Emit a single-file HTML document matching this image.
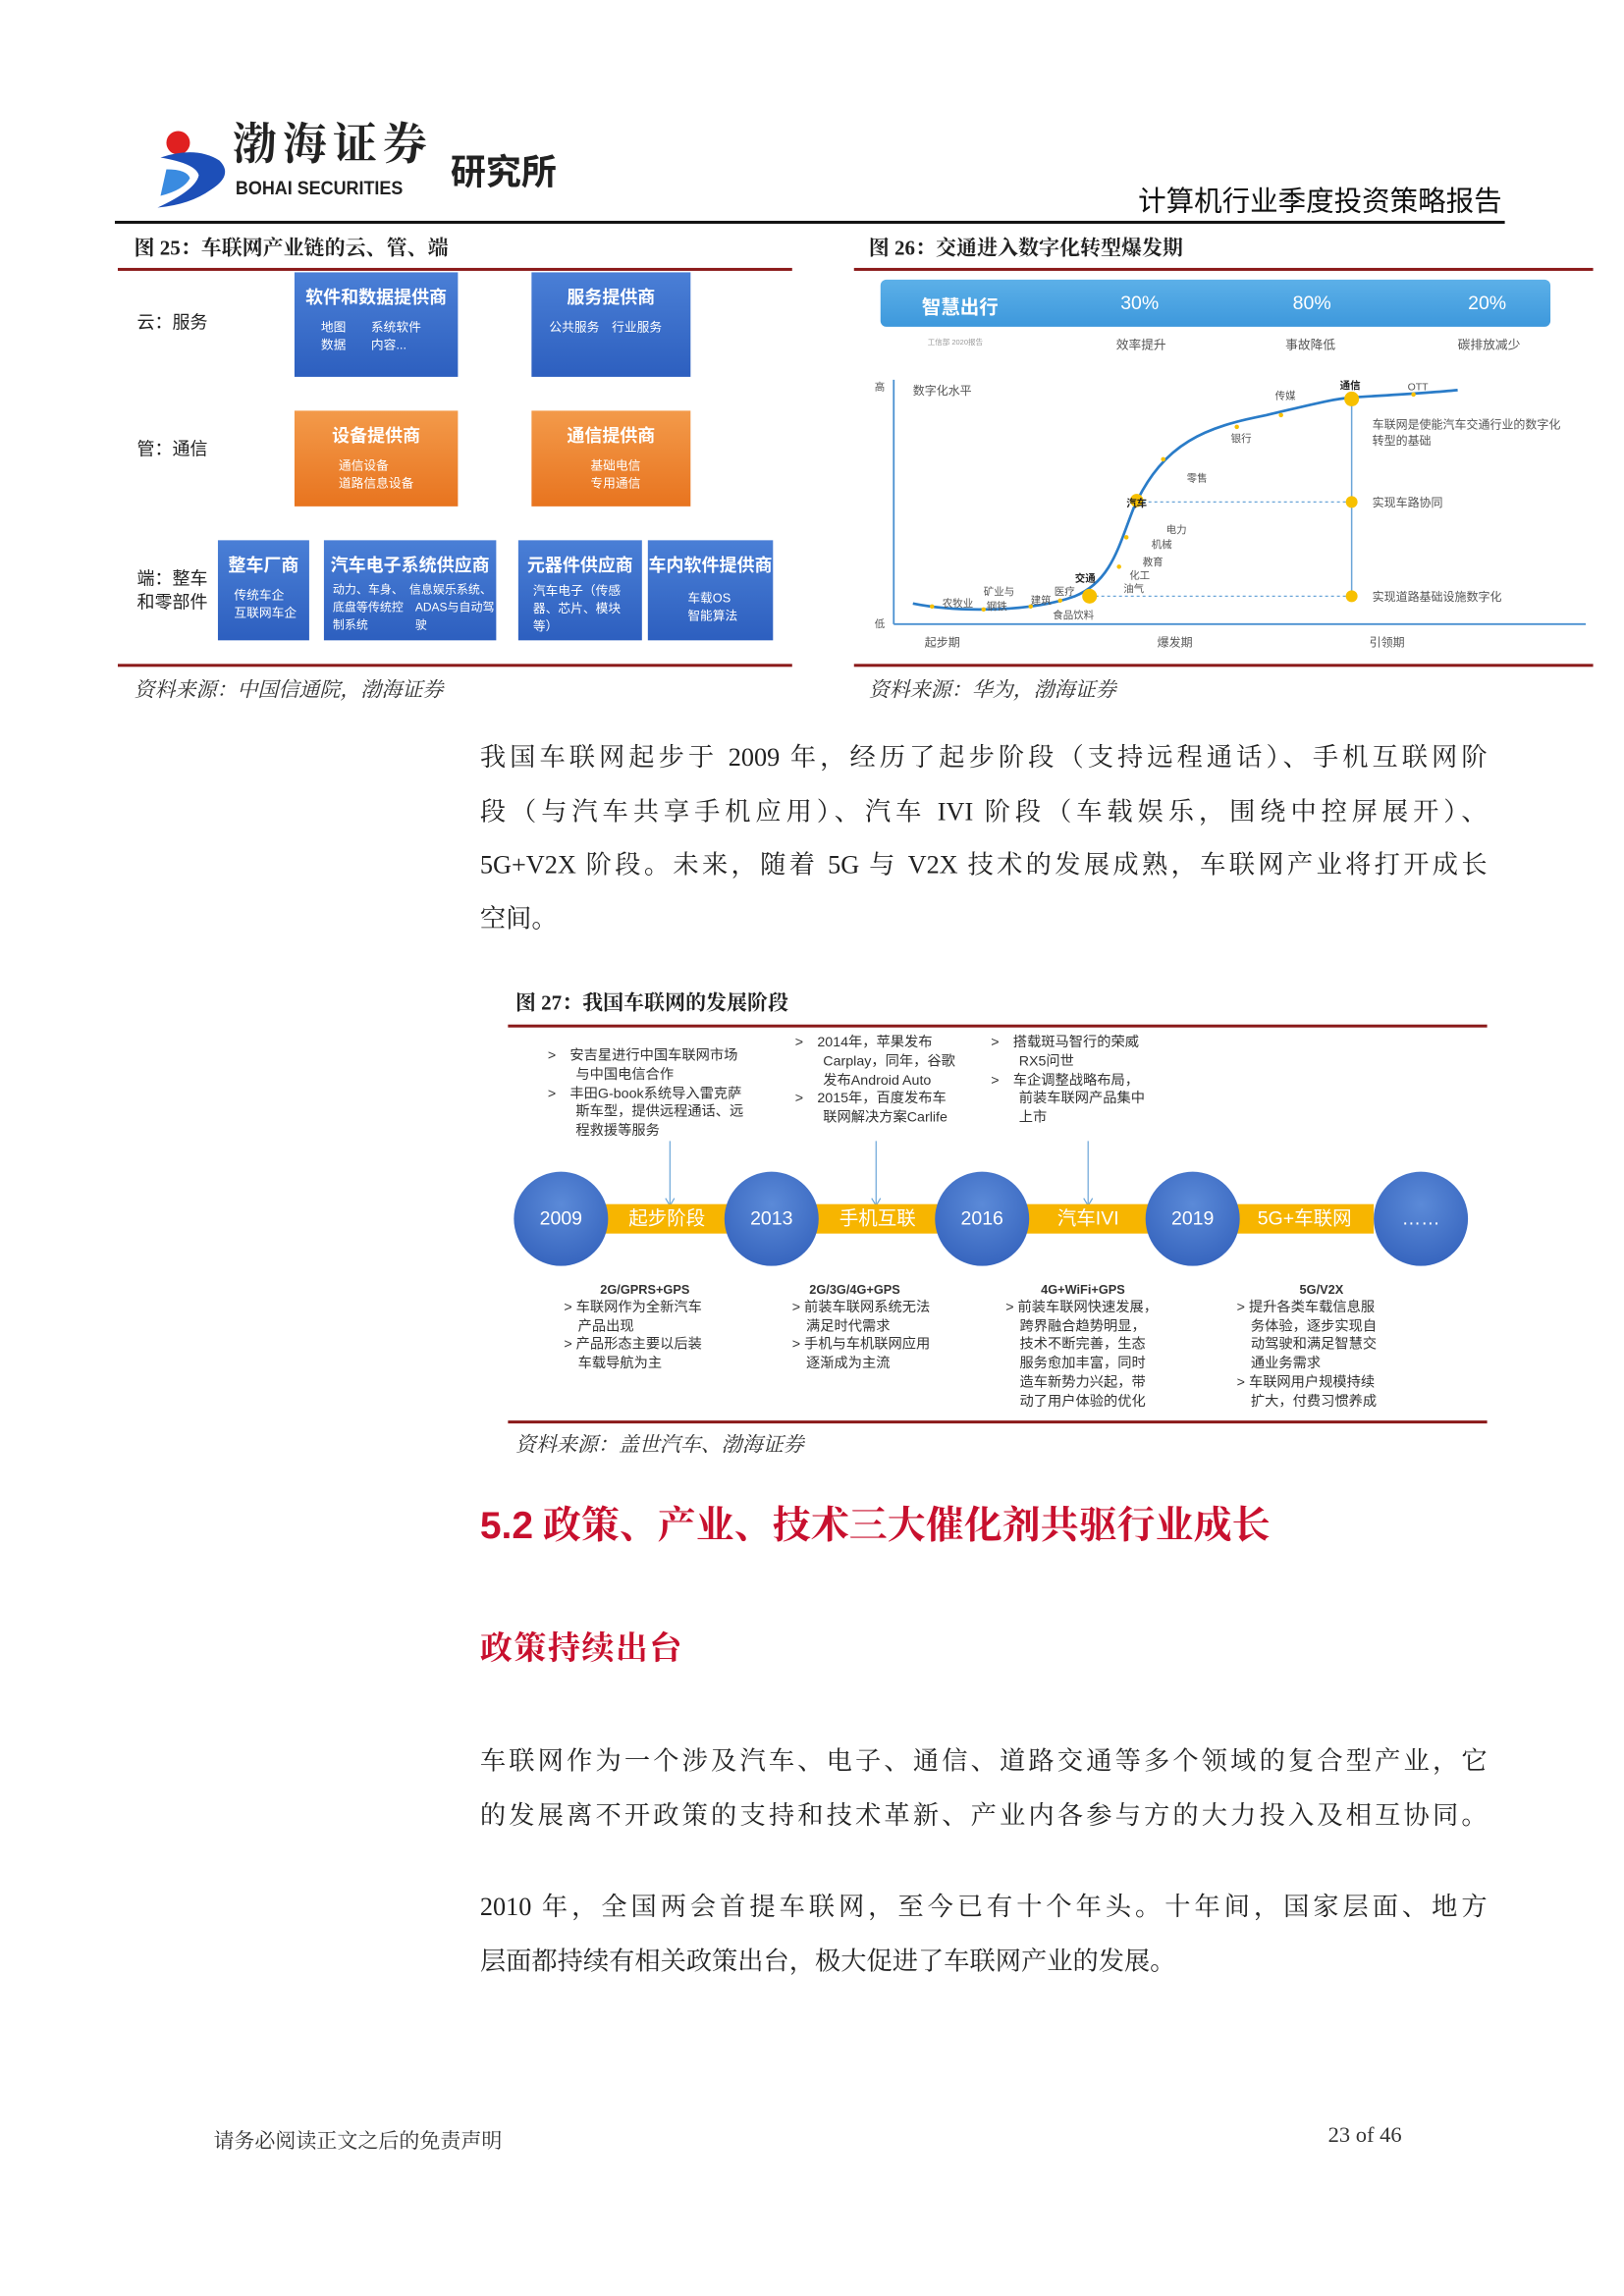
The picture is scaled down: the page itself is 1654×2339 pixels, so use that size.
<!DOCTYPE html>
<html><head><meta charset="utf-8">
<style>
html,body{margin:0;padding:0;background:#fff;}
body{width:1654px;height:2339px;overflow:hidden;position:relative;}
#p{position:absolute;left:0;top:0;width:1103px;height:1560px;transform:scale(1.4996);transform-origin:0 0;font-family:"Liberation Sans","Noto Sans CJK SC",sans-serif;color:#222;}
.a{position:absolute;white-space:nowrap;}
.serif{font-family:"Liberation Serif","Noto Serif CJK SC",serif;}
.bx{position:absolute;color:#fff;box-sizing:border-box;}
.blue{background:linear-gradient(#4a7fd6,#2d5fbf);}
.org{background:linear-gradient(#f39a4a,#e8741f);}
.bx b{display:block;text-align:center;font-size:12px;margin-top:8px;}
.bx .s{font-size:8.5px;line-height:12px;}
.para{position:absolute;left:326px;width:684px;font-family:"Liberation Serif","Noto Serif CJK SC",serif;font-size:17.5px;line-height:36.5px;color:#222;}
.para div{white-space:nowrap;text-align:justify;text-align-last:justify;text-justify:inter-character;}
.para div.l{text-align-last:left;}
.red{position:absolute;height:2px;background:#8b1a1a;}
.c{position:absolute;width:64px;height:64px;border-radius:50%;background:radial-gradient(circle at 50% 35%,#5b8ad8,#2e5cb8);color:#fff;font-size:13px;text-align:center;line-height:64px;top:796px;}
.y{position:absolute;top:818px;height:20px;background:#f7b500;color:#fff;font-size:13px;text-align:center;line-height:20px;}
.t{position:absolute;font-size:9.5px;line-height:12.8px;color:#333;}
</style></head><body><div id="p">

<svg class="a" style="left:103px;top:85px" width="60" height="58" viewBox="0 0 60 58">
<circle cx="18" cy="12" r="8" fill="#e02020"/>
<path d="M6 22 Q30 14 46 24 Q56 34 40 44 Q26 54 4 56 Q30 44 32 34 Q30 26 6 22Z" fill="#1d4fb8"/>
<path d="M10 30 Q24 30 26 36 Q22 44 6 48 Z" fill="#3a8be0"/>
</svg>
<div class="a serif" style="left:158px;top:82px;font-size:30px;line-height:34px;font-weight:bold;color:#222;letter-spacing:4px">渤海证券</div>
<div class="a" style="left:160px;top:120px;font-size:13px;font-weight:bold;color:#222;transform:scaleX(0.92);transform-origin:0 0">BOHAI SECURITIES</div>
<div class="a" style="left:306px;top:97px;font-size:24px;font-weight:bold;color:#222">研究所</div>
<div class="a" style="right:83px;top:122px;font-size:19px;color:#111">计算机行业季度投资策略报告</div>
<div class="a" style="left:78px;top:150px;width:944px;height:2px;background:#111"></div>

<div class="a serif" style="left:91px;top:158px;font-size:14px;font-weight:bold">图 25：车联网产业链的云、管、端</div>
<div class="red" style="left:80px;top:182px;width:458px"></div>
<div class="a" style="left:93px;top:210px;font-size:12px">云：服务</div>
<div class="a" style="left:93px;top:296px;font-size:12px">管：通信</div>
<div class="a" style="left:93px;top:385px;font-size:12px;line-height:16px">端：整车<br>和零部件</div>
<div class="bx blue" style="left:200px;top:185px;width:111px;height:71px"><b>软件和数据提供商</b><div class="s" style="margin:6px 0 0 18px">地图　　系统软件<br>数据　　内容...</div></div>
<div class="bx blue" style="left:361px;top:185px;width:108px;height:71px"><b>服务提供商</b><div class="s" style="margin:6px 0 0 12px">公共服务　行业服务</div></div>
<div class="bx org" style="left:200px;top:279px;width:111px;height:65px"><b>设备提供商</b><div class="s" style="margin:6px 0 0 30px">通信设备<br>道路信息设备</div></div>
<div class="bx org" style="left:361px;top:279px;width:108px;height:65px"><b>通信提供商</b><div class="s" style="margin:6px 0 0 40px">基础电信<br>专用通信</div></div>
<div class="bx blue" style="left:148px;top:367px;width:62px;height:68px"><b>整车厂商</b><div class="s" style="margin:6px 0 0 11px">传统车企<br>互联网车企</div></div>
<div class="bx blue" style="left:220px;top:367px;width:117px;height:68px"><b>汽车电子系统供应商</b><div class="s" style="margin:3px 0 0 6px;font-size:8px">动力、车身、　信息娱乐系统、<br>底盘等传统控　ADAS与自动驾<br>制系统　　　　驶</div></div>
<div class="bx blue" style="left:352px;top:367px;width:84px;height:68px"><b>元器件供应商</b><div class="s" style="margin:3px 0 0 10px">汽车电子（传感<br>器、芯片、模块<br>等）</div></div>
<div class="bx blue" style="left:440px;top:367px;width:85px;height:68px"><b>车内软件提供商</b><div class="s" style="margin:8px 0 0 27px">车载OS<br>智能算法</div></div>
<div class="red" style="left:80px;top:451px;width:458px"></div>
<div class="a serif" style="left:91px;top:458px;font-size:14px;font-style:italic;color:#333">资料来源：中国信通院，渤海证券</div>

<div class="a serif" style="left:590px;top:158px;font-size:14px;font-weight:bold">图 26：交通进入数字化转型爆发期</div>
<div class="red" style="left:580px;top:182px;width:502px"></div>
<div class="a" style="left:598px;top:190px;width:455px;height:32px;border-radius:4px;background:linear-gradient(#5cb0e8,#3d98dc)"></div>
<div class="a" style="left:626px;top:198px;font-size:13px;color:#fff;font-weight:bold">智慧出行</div>
<div class="a" style="left:761px;top:198px;font-size:13px;color:#fff">30%</div>
<div class="a" style="left:878px;top:198px;font-size:13px;color:#fff">80%</div>
<div class="a" style="left:997px;top:198px;font-size:13px;color:#fff">20%</div>
<div class="a" style="left:630px;top:229px;font-size:5px;color:#999">工信部 2020报告</div>
<div class="a" style="left:758px;top:228px;font-size:8.5px;color:#555">效率提升</div>
<div class="a" style="left:873px;top:228px;font-size:8.5px;color:#555">事故降低</div>
<div class="a" style="left:990px;top:228px;font-size:8.5px;color:#555">碳排放减少</div>
<svg class="a" style="left:580px;top:240px" width="502" height="210" viewBox="580 240 502 210">
<line x1="607" y1="424" x2="607" y2="258" stroke="#4a90d0" stroke-width="1.2"/>
<line x1="607" y1="424" x2="1077" y2="424" stroke="#4a90d0" stroke-width="1.2"/>
<line x1="918" y1="268" x2="918" y2="406" stroke="#6aa5d8" stroke-width="1"/>
<line x1="772" y1="341" x2="918" y2="341" stroke="#6aa5d8" stroke-width="0.8" stroke-dasharray="2,2"/>
<line x1="740" y1="405" x2="918" y2="405" stroke="#6aa5d8" stroke-width="0.8" stroke-dasharray="2,2"/>
<path d="M620 410 C650 416 700 416 730 405 C755 395 760 370 770 345 C790 300 820 290 860 282 C890 275 905 271 918 270 C950 268 970 267 990 265" fill="none" stroke="#2a7cc8" stroke-width="1.8"/>
<g fill="#f7c000"><circle cx="740" cy="405" r="5"/><circle cx="772" cy="340" r="4.5"/><circle cx="918" cy="271" r="5"/><circle cx="918" cy="341" r="4"/><circle cx="918" cy="405" r="4"/>
<circle cx="633" cy="412" r="1.5"/><circle cx="668" cy="414" r="1.5"/><circle cx="700" cy="412" r="1.5"/><circle cx="720" cy="408" r="1.5"/><circle cx="760" cy="385" r="1.5"/><circle cx="765" cy="365" r="1.5"/><circle cx="790" cy="312" r="1.5"/><circle cx="840" cy="290" r="1.5"/><circle cx="870" cy="282" r="1.5"/><circle cx="960" cy="268" r="1.5"/></g>
<g font-size="7" fill="#555" font-family="Liberation Sans,Noto Sans CJK SC,sans-serif">
<text x="594" y="265">高</text><text x="594" y="426">低</text>
<text x="620" y="268" font-size="8">数字化水平</text>
<text x="640" y="412">农牧业</text><text x="668" y="404">矿业与</text><text x="670" y="414">钢铁</text>
<text x="700" y="410">建筑</text><text x="716" y="404">医疗</text><text x="715" y="420">食品饮料</text>
<text x="730" y="395" font-weight="bold" fill="#222">交通</text>
<text x="763" y="402">油气</text><text x="767" y="393">化工</text><text x="776" y="384">教育</text><text x="782" y="372">机械</text><text x="792" y="362">电力</text>
<text x="765" y="344" font-weight="bold" fill="#222">汽车</text>
<text x="806" y="327">零售</text><text x="836" y="300">银行</text><text x="866" y="271">传媒</text>
<text x="910" y="264" font-weight="bold" fill="#222">通信</text><text x="956" y="265">OTT</text>
<text x="932" y="291" font-size="8">车联网是使能汽车交通行业的数字化</text><text x="932" y="302" font-size="8">转型的基础</text>
<text x="932" y="344" font-size="8">实现车路协同</text><text x="932" y="408" font-size="8">实现道路基础设施数字化</text>
<text x="628" y="439" font-size="8">起步期</text><text x="786" y="439" font-size="8">爆发期</text><text x="930" y="439" font-size="8">引领期</text>
</g>
</svg>
<div class="red" style="left:580px;top:451px;width:502px"></div>
<div class="a serif" style="left:590px;top:458px;font-size:14px;font-style:italic;color:#333">资料来源：华为，渤海证券</div>

<div class="para" style="top:496px">
<div>我国车联网起步于 2009 年，经历了起步阶段（支持远程通话）、手机互联网阶</div>
<div>段（与汽车共享手机应用）、汽车 IVI 阶段（车载娱乐，围绕中控屏展开）、</div>
<div>5G+V2X 阶段。未来，随着 5G 与 V2X 技术的发展成熟，车联网产业将打开成长</div>
<div class="l">空间。</div>
</div>

<div class="a serif" style="left:350px;top:671px;font-size:14px;font-weight:bold">图 27：我国车联网的发展阶段</div>
<div class="red" style="left:345px;top:696px;width:665px"></div>
<div class="t" style="left:372px;top:712px">&gt;　安吉星进行中国车联网市场<br>　　与中国电信合作<br>&gt;　丰田G-book系统导入雷克萨<br>　　斯车型，提供远程通话、远<br>　　程救援等服务</div>
<div class="t" style="left:540px;top:703px">&gt;　2014年，苹果发布<br>　　Carplay，同年，谷歌<br>　　发布Android Auto<br>&gt;　2015年，百度发布车<br>　　联网解决方案Carlife</div>
<div class="t" style="left:673px;top:703px">&gt;　搭载斑马智行的荣威<br>　　RX5问世<br>&gt;　车企调整战略布局，<br>　　前装车联网产品集中<br>　　上市</div>
<svg class="a" style="left:440px;top:775px" width="320" height="50"><g stroke="#6aa5d8" stroke-width="0.8" fill="none"><line x1="15" y1="0" x2="15" y2="43"/><path d="M12 39 L15 44 L18 39"/><line x1="155" y1="0" x2="155" y2="43"/><path d="M152 39 L155 44 L158 39"/><line x1="299" y1="0" x2="299" y2="43"/><path d="M296 39 L299 44 L302 39"/></g></svg>
<div class="y" style="left:410px;width:86px">起步阶段</div>
<div class="y" style="left:553px;width:86px">手机互联</div>
<div class="y" style="left:696px;width:86px">汽车IVI</div>
<div class="y" style="left:839px;width:94px">5G+车联网</div>
<div class="c" style="left:349px">2009</div>
<div class="c" style="left:492px">2013</div>
<div class="c" style="left:635px">2016</div>
<div class="c" style="left:778px">2019</div>
<div class="c" style="left:933px">……</div>
<div class="t" style="left:383px;top:870px"><div style="text-align:center;width:110px;font-weight:bold;font-size:8.5px">2G/GPRS+GPS</div>&gt; 车联网作为全新汽车<br>　产品出现<br>&gt; 产品形态主要以后装<br>　车载导航为主</div>
<div class="t" style="left:538px;top:870px"><div style="text-align:center;width:85px;font-weight:bold;font-size:8.5px">2G/3G/4G+GPS</div>&gt; 前装车联网系统无法<br>　满足时代需求<br>&gt; 手机与车机联网应用<br>　逐渐成为主流</div>
<div class="t" style="left:683px;top:870px"><div style="text-align:center;width:105px;font-weight:bold;font-size:8.5px">4G+WiFi+GPS</div>&gt; 前装车联网快速发展，<br>　跨界融合趋势明显，<br>　技术不断完善，生态<br>　服务愈加丰富，同时<br>　造车新势力兴起，带<br>　动了用户体验的优化</div>
<div class="t" style="left:840px;top:870px"><div style="text-align:center;width:115px;font-weight:bold;font-size:8.5px">5G/V2X</div>&gt; 提升各类车载信息服<br>　务体验，逐步实现自<br>　动驾驶和满足智慧交<br>　通业务需求<br>&gt; 车联网用户规模持续<br>　扩大，付费习惯养成</div>
<div class="red" style="left:345px;top:965px;width:665px"></div>
<div class="a serif" style="left:350px;top:971px;font-size:14px;font-style:italic;color:#333">资料来源：盖世汽车、渤海证券</div>

<div class="a serif" style="left:326px;top:1016px;font-size:26px;font-weight:bold;color:#c8102e"><span style="font-family:'Liberation Sans',sans-serif">5.2</span> 政策、产业、技术三大催化剂共驱行业成长</div>
<div class="a serif" style="left:326px;top:1103px;font-size:22px;font-weight:bold;color:#c8102e;letter-spacing:1px">政策持续出台</div>

<div class="para" style="top:1178px">
<div>车联网作为一个涉及汽车、电子、通信、道路交通等多个领域的复合型产业，它</div>
<div>的发展离不开政策的支持和技术革新、产业内各参与方的大力投入及相互协同。</div>
</div>
<div class="para" style="top:1277px">
<div>2010 年，全国两会首提车联网，至今已有十个年头。十年间，国家层面、地方</div>
<div class="l">层面都持续有相关政策出台，极大促进了车联网产业的发展。</div>
</div>

<div class="a serif" style="left:145px;top:1444px;font-size:14px;color:#333">请务必阅读正文之后的免责声明</div>
<div class="a serif" style="left:902px;top:1443px;font-size:15px;color:#333">23 of 46</div>
</div></body></html>
